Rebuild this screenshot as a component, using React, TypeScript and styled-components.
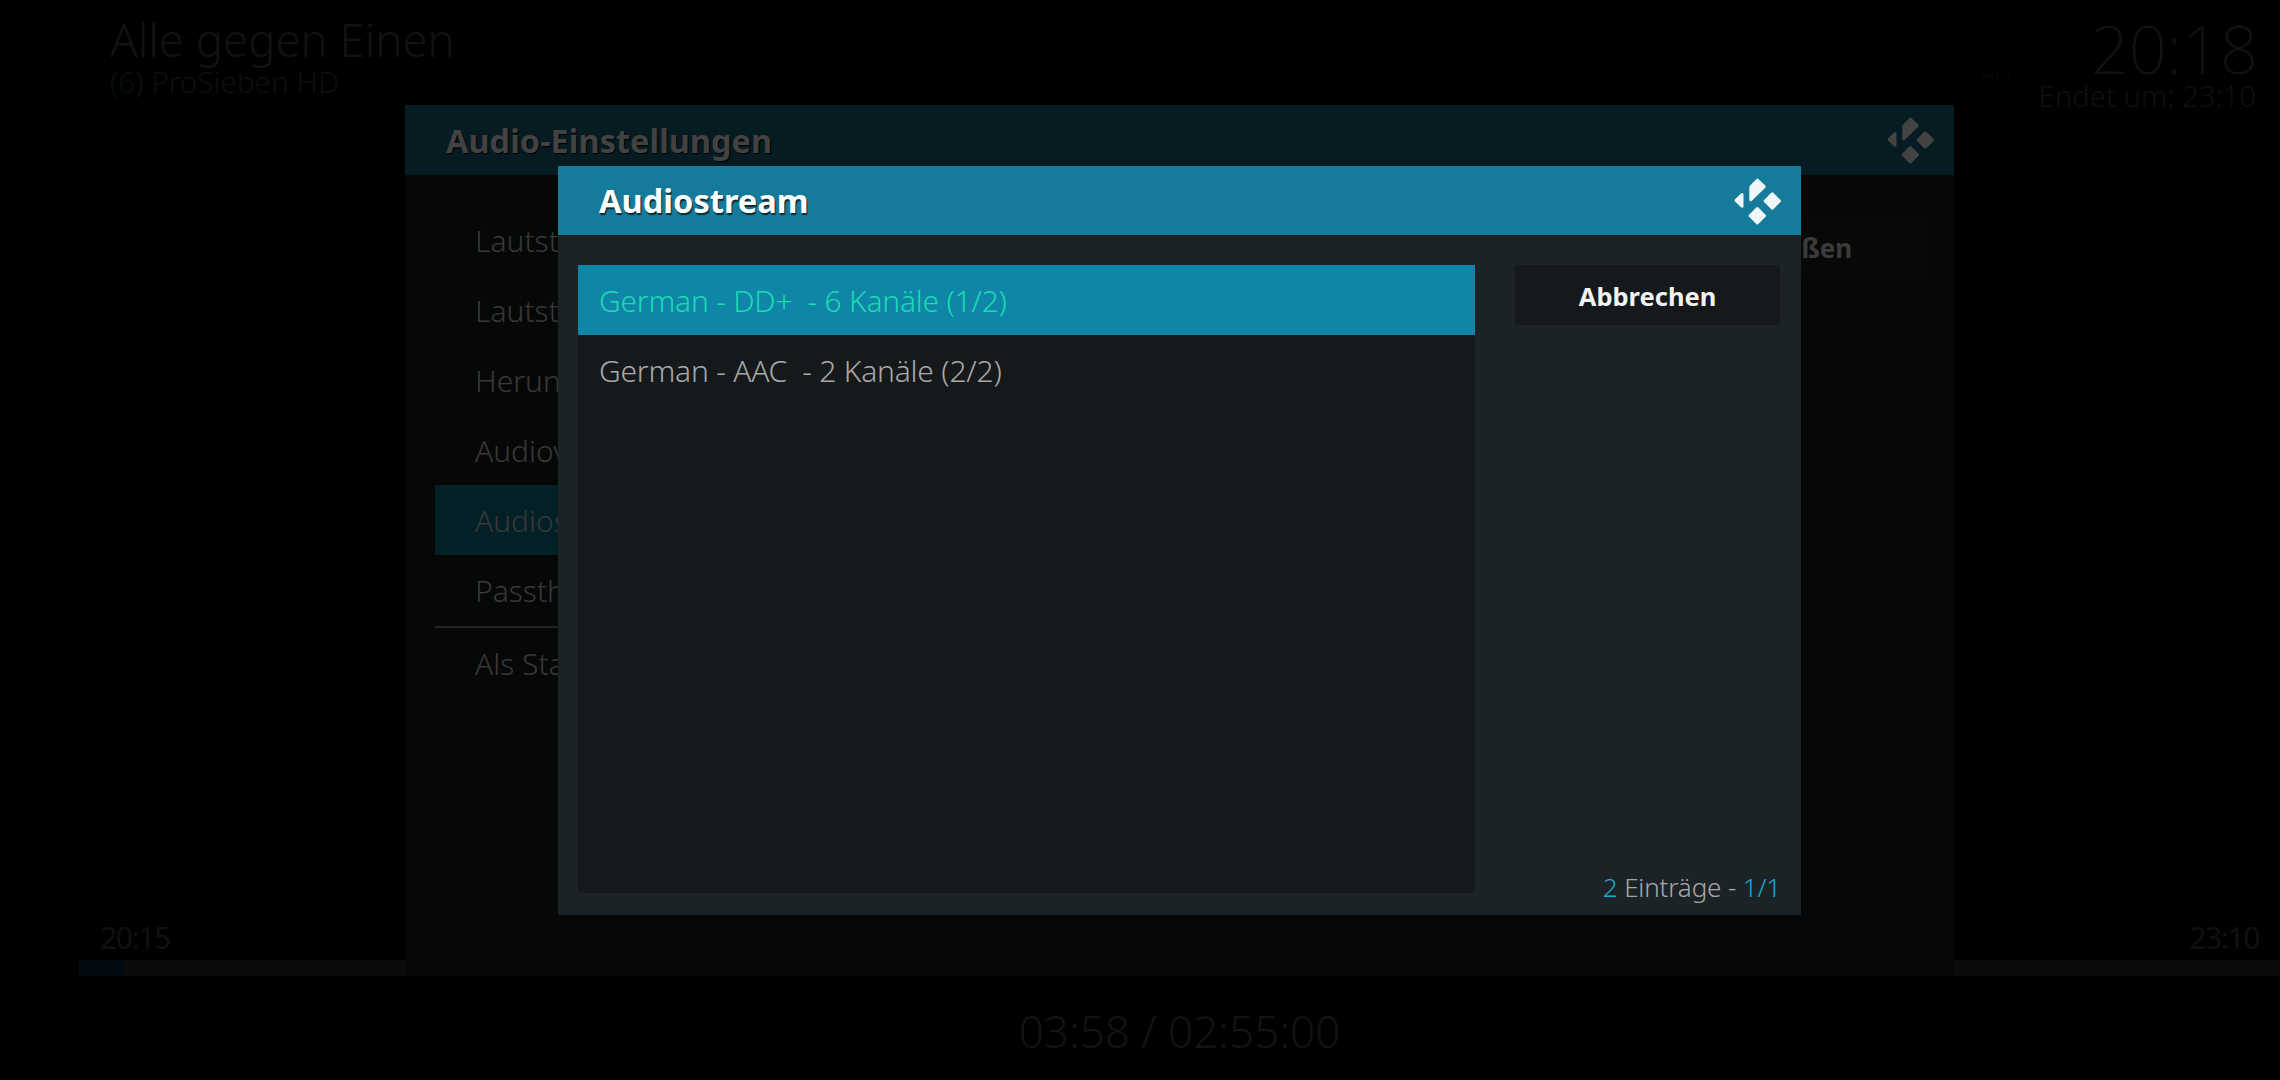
import styled, { createGlobalStyle } from "styled-components";

const settingsRows = [
  { label: "Lautstärke" },
  { label: "Lautstärkeverstärkung" },
  { label: "Heruntermischen" },
  { label: "Audioversatz" },
  { label: "Audiostream", active: true },
  { label: "Passthrough" },
];

const streams = [
  { label: "German - DD+  - 6 Kanäle (1/2)", selected: true },
  { label: "German - AAC  - 2 Kanäle (2/2)", selected: false },
];

function KodiLogo({ color, className }: { color: string; className?: string }) {
  return (
    <svg className={className} viewBox="0 0 48 48" fill={color} stroke={color} strokeWidth="3" strokeLinejoin="round">
      <path d="M2.1 23.4 8 17.5V29.3Z" />
      <path d="M16.8 10 23.3 3.2 30.2 9.7 16.8 22.6Z" />
      <path d="M38.3 16.8 45.5 24 38.3 31.2 31.1 24Z" />
      <path d="M23.3 31.5 30.5 38.7 23.3 45.9 16.1 38.7Z" />
    </svg>
  );
}

function App() {
  return (
    <Page>
      <GlobalStyle />
      <TopBar>
        <div>
          <ShowTitle>Alle gegen Einen</ShowTitle>
          <Channel>
            (<ChannelNumber>6</ChannelNumber>) ProSieben HD
          </Channel>
        </div>
        <ClockBox>
          <Clock>20:18</Clock>
          <EndTime>Endet um: 23:10</EndTime>
        </ClockBox>
      </TopBar>

      <StartTime>20:15</StartTime>
      <EndMark>23:10</EndMark>
      <ProgressTrack>
        <ProgressFill />
      </ProgressTrack>

      <SettingsPanel>
        <SettingsHeader>
          <SettingsTitle>Audio-Einstellungen</SettingsTitle>
          <HeaderLogo color="#434343" />
        </SettingsHeader>
        <SettingsBody>
          <SettingsList>
            {settingsRows.map((row) => (
              <SettingsRow key={row.label} $active={row.active}>
                {row.label}
              </SettingsRow>
            ))}
            <SettingsDivider />
            <SettingsRow>Als Standard für alle Medien festlegen</SettingsRow>
          </SettingsList>
          <CloseButton>Schließen</CloseButton>
        </SettingsBody>
      </SettingsPanel>

      <PlayTime>03:58 / 02:55:00</PlayTime>

      <StudioBadge>HD</StudioBadge>

      <Dialog>
        <DialogHeader>
          <DialogTitle>Audiostream</DialogTitle>
          <HeaderLogo color="#eef7fa" />
        </DialogHeader>
        <DialogBody>
          <StreamList>
            {streams.map((stream) => (
              <StreamRow key={stream.label} $selected={stream.selected}>
                {stream.label}
              </StreamRow>
            ))}
          </StreamList>
          <SideColumn>
            <CancelButton>Abbrechen</CancelButton>
            <ItemCount>
              <CountAccent>2</CountAccent> Einträge - <CountAccent>1/1</CountAccent>
            </ItemCount>
          </SideColumn>
        </DialogBody>
      </Dialog>
    </Page>
  );
}

const GlobalStyle = createGlobalStyle`
  html, body {
    margin: 0;
    background: #000;
    font-family: "Noto Sans", "Open Sans", sans-serif;
  }
`;

const Page = styled.div`
  position: relative;
  width: 2280px;
  height: 1080px;
  overflow: hidden;
  background: #000;
  display: grid;
  grid-template-columns: 405px 1549px 326px;
  grid-template-rows: 105px 855px 16px 104px;
`;

const TopBar = styled.header`
  grid-column: 1 / 4;
  grid-row: 1;
  display: flex;
  justify-content: space-between;
  padding: 12px 22px 0 110px;
`;

const ShowTitle = styled.div`
  font-size: 45.5px;
  line-height: 54px;
  color: #121212;
  font-weight: 300;
`;

const Channel = styled.div`
  font-size: 29.7px;
  line-height: 32px;
  color: #0f0f0f;
  font-weight: 300;
`;

const ChannelNumber = styled.span`
  color: #041014;
`;

const ClockBox = styled.div`
  display: flex;
  flex-direction: column;
  align-items: flex-end;
  margin-top: -2px;
`;

const Clock = styled.div`
  font-size: 66.6px;
  line-height: 78px;
  color: #121212;
  font-weight: 200;
`;

const EndTime = styled.div`
  font-size: 29.3px;
  line-height: 32px;
  margin: -8px 2px 0 0;
  color: #101010;
  font-weight: 300;
`;

const StudioBadge = styled.div`
  position: absolute;
  left: 1979px;
  top: 60px;
  font-size: 22px;
  font-weight: 300;
  color: #060606;
`;

const StartTime = styled.div`
  grid-column: 1;
  grid-row: 2;
  align-self: end;
  padding: 0 0 2px 100px;
  font-size: 30px;
  line-height: 40px;
  letter-spacing: -1.4px;
  color: #101010;
`;

const EndMark = styled.div`
  grid-column: 3;
  grid-row: 2;
  align-self: end;
  justify-self: end;
  padding: 0 21px 2px 0;
  font-size: 30px;
  line-height: 40px;
  letter-spacing: -1.4px;
  color: #101010;
`;

const ProgressTrack = styled.div`
  grid-column: 1 / 4;
  grid-row: 3;
  margin-left: 79px;
  background: #0b0b0b;
`;

const ProgressFill = styled.div`
  width: 45px;
  height: 100%;
  background: #020b0f;
`;

const SettingsPanel = styled.section`
  grid-column: 2;
  grid-row: 2 / 4;
  position: relative;
  display: flex;
  flex-direction: column;
  background: #060808;
`;

const SettingsHeader = styled.div`
  height: 70px;
  flex: none;
  display: flex;
  align-items: center;
  justify-content: space-between;
  padding: 0 19px 0 41px;
  background: #071c22;
`;

const SettingsTitle = styled.div`
  font-size: 32.5px;
  font-weight: 700;
  color: #424242;
  text-shadow: 1px 1px 1px #000;
`;

const HeaderLogo = styled(KodiLogo)`
  width: 48px;
  height: 48px;
  flex: none;
`;

const SettingsBody = styled.div`
  flex: 1;
  display: flex;
  justify-content: space-between;
  padding: 30px 31px 0 30px;
`;

const SettingsList = styled.div`
  width: 1000px;
`;

const SettingsRow = styled.div<{ $active?: boolean }>`
  height: 70px;
  display: flex;
  align-items: center;
  padding-left: 40px;
  white-space: nowrap;
  font-size: 30px;
  font-weight: 300;
  color: #383838;
  background: ${(p) => (p.$active ? "#032027" : "transparent")};
`;

const SettingsDivider = styled.div`
  height: 2px;
  margin-top: 1px;
  background: #222323;
`;

const CloseButton = styled.div`
  width: 268px;
  height: 60px;
  margin-top: 13px;
  display: flex;
  align-items: center;
  justify-content: center;
  font-size: 26px;
  font-weight: 700;
  color: #3b3b3b;
  background: #070909;
`;

const PlayTime = styled.div`
  grid-column: 2;
  grid-row: 4;
  text-align: center;
  padding-top: 25px;
  font-size: 44px;
  line-height: 60px;
  font-weight: 300;
  color: #131313;
`;

const Dialog = styled.section`
  position: absolute;
  left: 558px;
  top: 166px;
  width: 1243px;
  height: 749px;
  display: flex;
  flex-direction: column;
  background: #1c2326;
`;

const DialogHeader = styled.div`
  height: 69px;
  flex: none;
  display: flex;
  align-items: center;
  justify-content: space-between;
  padding: 0 19px 0 41px;
  background: #167b9b;
`;

const DialogTitle = styled.div`
  font-size: 32.6px;
  font-weight: 700;
  color: #fff;
  text-shadow: 1px 2px 1px #0a2a35;
`;

const DialogBody = styled.div`
  flex: 1;
  display: flex;
  gap: 40px;
  padding: 30px 21px 22px 20px;
`;

const StreamList = styled.div`
  width: 897px;
  flex: none;
  background: #15191b;
  border-radius: 0 0 4px 4px;
`;

const StreamRow = styled.div<{ $selected: boolean }>`
  height: 70px;
  display: flex;
  align-items: center;
  padding-left: 21px;
  white-space: pre;
  font-size: 30px;
  letter-spacing: -0.22px;
  font-weight: 300;
  color: ${(p) => (p.$selected ? "#1adcb0" : "#a8aaaa")};
  background: ${(p) => (p.$selected ? "#0f85a7" : "transparent")};
`;

const SideColumn = styled.div`
  flex: 1;
  display: flex;
  flex-direction: column;
  justify-content: space-between;
`;

const CancelButton = styled.div`
  height: 60px;
  padding-top: 2px;
  box-sizing: border-box;
  display: flex;
  align-items: center;
  justify-content: center;
  font-size: 25.5px;
  font-weight: 700;
  color: #f2f2f2;
  background: #15191b;
  border-radius: 2px;
`;

const ItemCount = styled.div`
  text-align: right;
  font-size: 26px;
  line-height: 30px;
  letter-spacing: -0.15px;
  margin: 0 -1px -9px 0;
  font-weight: 300;
  color: #a8aaaa;
`;

const CountAccent = styled.span`
  color: #22a6cf;
`;

export default App;
